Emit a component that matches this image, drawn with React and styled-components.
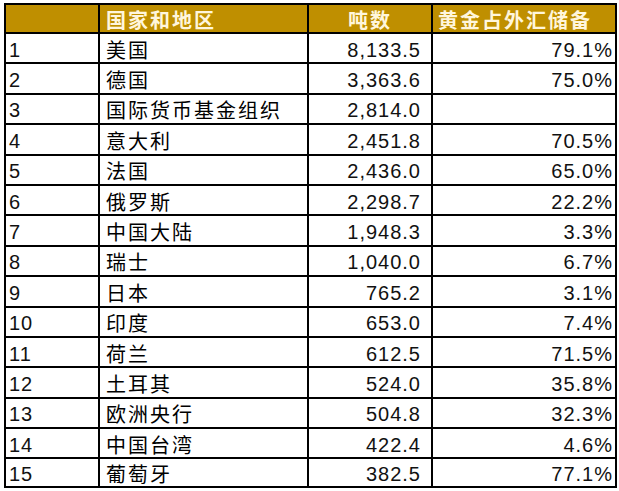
import React from 'react';
import styled, { createGlobalStyle } from 'styled-components';

const GlobalStyle = createGlobalStyle`
    body {
        margin: 0;
        background: #ffffff;
    }
`;

const rows = [
    ['1', '美国', '8,133.5', '79.1%'],
    ['2', '德国', '3,363.6', '75.0%'],
    ['3', '国际货币基金组织', '2,814.0', ''],
    ['4', '意大利', '2,451.8', '70.5%'],
    ['5', '法国', '2,436.0', '65.0%'],
    ['6', '俄罗斯', '2,298.7', '22.2%'],
    ['7', '中国大陆', '1,948.3', '3.3%'],
    ['8', '瑞士', '1,040.0', '6.7%'],
    ['9', '日本', '765.2', '3.1%'],
    ['10', '印度', '653.0', '7.4%'],
    ['11', '荷兰', '612.5', '71.5%'],
    ['12', '土耳其', '524.0', '35.8%'],
    ['13', '欧洲央行', '504.8', '32.3%'],
    ['14', '中国台湾', '422.4', '4.6%'],
    ['15', '葡萄牙', '382.5', '77.1%'],
];

function App() {
    return (
        <Page>
            <GlobalStyle />
            <Sheet>
                <HeadCell />
                <HeadCell $pl="6px">国家和地区</HeadCell>
                <HeadCell $align="center">吨数</HeadCell>
                <HeadCell $pl="5px">黄金占外汇储备</HeadCell>
                {rows.map((r) => (
                    <React.Fragment key={r[0]}>
                        <NumCell $pl="3px">{r[0]}</NumCell>
                        <NameCell>{r[1]}</NameCell>
                        <NumCell $align="flex-end" $pr="10px">{r[2]}</NumCell>
                        <NumCell $align="flex-end" $pr="2px">{r[3]}</NumCell>
                    </React.Fragment>
                ))}
            </Sheet>
        </Page>
    );
}

export default App;

const Page = styled.div`
    width: 619px;
    height: 491px;
    padding: 3px 0 0 4px;
    box-sizing: border-box;
`;

const Sheet = styled.div`
    display: grid;
    grid-template-columns: 92px 207px 122px 182px;
    grid-template-rows: 27px repeat(14, 28.4px) 26.4px;
    gap: 2px;
    padding: 2px;
    width: fit-content;
    background: #000000;
`;

const Cell = styled.div`
    display: flex;
    align-items: center;
    padding-top: 3px;
    box-sizing: border-box;
    background: #ffffff;
    white-space: nowrap;
`;

const HeadCell = styled(Cell)`
    background: #bf8f00;
    color: #fff6dc;
    font-family: "Noto Sans CJK SC", sans-serif;
    font-weight: 700;
    font-size: 20px;
    letter-spacing: 2px;
    line-height: 22px;
    justify-content: ${(p) => p.$align || 'flex-start'};
    padding-left: ${(p) => p.$pl || '0'};
`;

const NameCell = styled(Cell)`
    font-family: "Noto Sans CJK SC", sans-serif;
    font-size: 20px;
    letter-spacing: 2px;
    line-height: 22px;
    color: #000000;
    padding-left: 6px;
`;

const NumCell = styled(Cell)`
    font-family: "Liberation Sans", Arial, sans-serif;
    font-size: 20px;
    letter-spacing: 1px;
    line-height: 20px;
    color: #111111;
    justify-content: ${(p) => p.$align || 'flex-start'};
    padding-left: ${(p) => p.$pl || '0'};
    padding-right: ${(p) => p.$pr || '0'};
`;
